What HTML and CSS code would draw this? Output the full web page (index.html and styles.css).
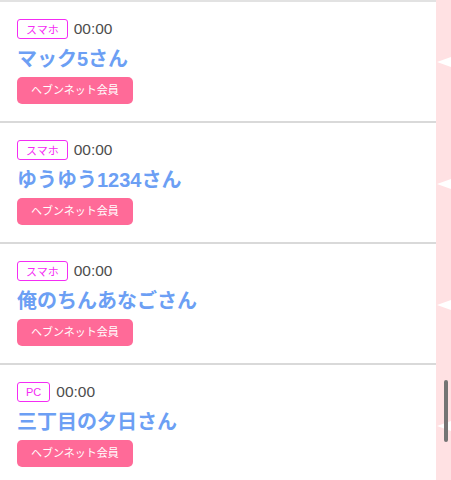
FILE: index.html
```html
<!DOCTYPE html>
<html lang="ja">

<head>
  <meta charset="UTF-8">
  <meta name="viewport" content="width=device-width, initial-scale=1.0">
  <title>ログイン中の会員</title>
  <link rel="stylesheet" href="styles.css">
</head>

<body>
  <div class="page">
    <ul class="member-list">
      <li class="member">
        <div class="meta">
          <span class="device">スマホ</span>
          <span class="time">00:00</span>
        </div>
        <div class="name">マック5さん</div>
        <span class="badge">ヘブンネット会員</span>
      </li>
      <li class="member">
        <div class="meta">
          <span class="device">スマホ</span>
          <span class="time">00:00</span>
        </div>
        <div class="name">ゆうゆう1234さん</div>
        <span class="badge">ヘブンネット会員</span>
      </li>
      <li class="member">
        <div class="meta">
          <span class="device">スマホ</span>
          <span class="time">00:00</span>
        </div>
        <div class="name">俺のちんあなごさん</div>
        <span class="badge">ヘブンネット会員</span>
      </li>
      <li class="member">
        <div class="meta">
          <span class="device">PC</span>
          <span class="time">00:00</span>
        </div>
        <div class="name">三丁目の夕日さん</div>
        <span class="badge">ヘブンネット会員</span>
      </li>
    </ul>

    <div class="side">
      <div class="side-cell"><span class="arrow"></span></div>
      <div class="side-cell"><span class="arrow"></span></div>
      <div class="side-cell"><span class="arrow"></span></div>
      <div class="side-cell"><span class="arrow"></span></div>
      <div class="scrollbar"></div>
    </div>
  </div>
</body>

</html>
```

FILE: styles.css
```css
body {
  margin: 0;
  height: 480px;
  overflow: hidden;
  background: white;
  font-family: "Liberation Sans", "Noto Sans CJK JP", sans-serif;
}

.page {
  display: flex;
}

.member-list {
  flex: 1;
  list-style: none;
  margin: 0;
  padding: 0;
  border-top: 2px solid #e2e2e2;
}

.member {
  height: 121px;
  box-sizing: border-box;
  padding: 17px 17px 0;
  border-bottom: 2px solid #d9d9d9;
  display: flex;
  flex-direction: column;
  align-items: flex-start;
}

.meta {
  display: flex;
  align-items: center;
  gap: 6px;
  height: 20px;
}

.device {
  display: flex;
  align-items: center;
  box-sizing: border-box;
  height: 20px;
  padding: 0 8px;
  border: 1px solid #f42cf4;
  border-radius: 3px;
  color: #f42cf4;
  font-size: 11px;
}

.time {
  color: #4d4d4d;
  font-size: 15.5px;
}

.name {
  margin-top: 5px;
  line-height: 30px;
  font-size: 20px;
  font-weight: bold;
  color: #6c9ff4;
}

.badge {
  margin-top: 3px;
  height: 27px;
  line-height: 27px;
  padding: 0 14px;
  border-radius: 5px;
  background: #ff6a98;
  color: #fff;
  font-size: 11px;
}

.side {
  position: relative;
  width: 15px;
  background: #ffe1e3;
}

.side-cell {
  height: 121px;
  display: flex;
  align-items: center;
  justify-content: flex-end;
}

.side-cell:first-child {
  height: 123px;
}

.arrow {
  width: 0;
  height: 0;
  border-top: 5px solid transparent;
  border-bottom: 5px solid transparent;
  border-right: 14px solid white;
}

.scrollbar {
  position: absolute;
  top: 380px;
  left: 8px;
  width: 4px;
  height: 62px;
  border-radius: 2px;
  background: #747474;
}
```
